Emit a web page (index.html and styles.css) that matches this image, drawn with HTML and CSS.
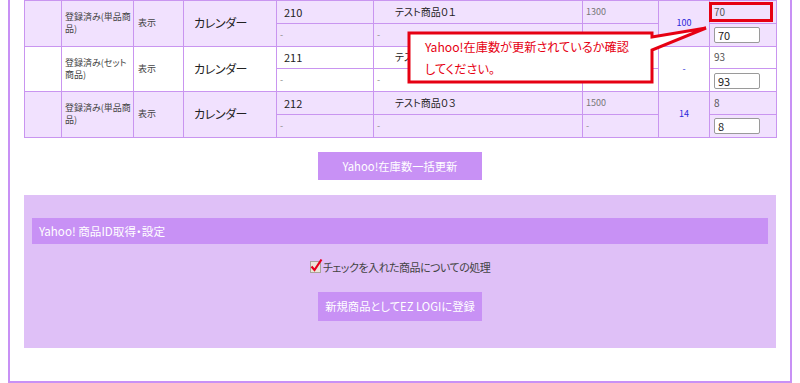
FILE: index.html
```html
<!DOCTYPE html>
<html lang="ja">
<head>
  <meta charset="UTF-8" />
  <meta name="viewport" content="width=device-width, initial-scale=1.0" />
  <title>Yahoo!在庫連携</title>
  <link rel="stylesheet" href="styles.css">
</head>
<body>
  <div class="page">
    <table class="items">
      <colgroup>
        <col style="width:37px"><col style="width:72px"><col style="width:50px">
        <col style="width:93px"><col style="width:97px"><col style="width:209px">
        <col style="width:76px"><col style="width:51px"><col style="width:67px">
      </colgroup>
      <tbody>
        <tr class="top odd">
          <td rowspan="2"></td>
          <td rowspan="2" class="status">登録済み(単品商品)</td>
          <td rowspan="2" class="small">表示</td>
          <td rowspan="2" class="cat">カレンダー</td>
          <td class="code">210</td>
          <td class="name">テスト商品０１</td>
          <td class="price">1300</td>
          <td rowspan="2" class="stock">100</td>
          <td class="ystock">70</td>
        </tr>
        <tr class="bottom odd">
          <td class="dash">-</td>
          <td class="dash">-</td>
          <td class="dash">-</td>
          <td class="field"><input type="text" value="70"></td>
        </tr>
        <tr class="top">
          <td rowspan="2"></td>
          <td rowspan="2" class="status">登録済み(セット商品)</td>
          <td rowspan="2" class="small">表示</td>
          <td rowspan="2" class="cat">カレンダー</td>
          <td class="code">211</td>
          <td class="name">テスト商品０２</td>
          <td class="price">1400</td>
          <td rowspan="2" class="stock">-</td>
          <td class="ystock">93</td>
        </tr>
        <tr class="bottom">
          <td class="dash">-</td>
          <td class="dash">-</td>
          <td class="dash">-</td>
          <td class="field"><input type="text" value="93"></td>
        </tr>
        <tr class="top odd">
          <td rowspan="2"></td>
          <td rowspan="2" class="status">登録済み(単品商品)</td>
          <td rowspan="2" class="small">表示</td>
          <td rowspan="2" class="cat">カレンダー</td>
          <td class="code">212</td>
          <td class="name">テスト商品０３</td>
          <td class="price">1500</td>
          <td rowspan="2" class="stock">14</td>
          <td class="ystock">8</td>
        </tr>
        <tr class="bottom odd">
          <td class="dash">-</td>
          <td class="dash">-</td>
          <td class="dash">-</td>
          <td class="field"><input type="text" value="8"></td>
        </tr>
      </tbody>
    </table>

    <button type="button" class="btn btn-update">Yahoo!在庫数一括更新</button>

    <div class="panel">
      <div class="panel-title">Yahoo! 商品ID取得・設定</div>
      <div class="check-row">
        <svg class="check-icon" width="13" height="16" viewBox="0 0 13 16">
          <rect x="0.5" y="3.5" width="10" height="11" fill="#ece6da" stroke="#a9a49a"/>
          <path d="M1.5 8.5 L4.5 12 L11.5 1.5" fill="none" stroke="#e8001c" stroke-width="2.2"/>
        </svg><span>チェックを入れた商品についての処理</span>
      </div>
      <button type="button" class="btn btn-register">新規商品としてEZ LOGIに登録</button>
    </div>

    <!-- 注釈 -->
    <div class="mark"></div>
    <div class="callout">
      <svg width="302" height="58" viewBox="0 0 302 58">
        <path d="M2 7 H245 V11 L299 2 L245 24 V56 H2 Z" fill="#fff" stroke="#e60012" stroke-width="3" stroke-linejoin="miter"/>
      </svg>
      <p class="callout-text">Yahoo!在庫数が更新されているか確認<br>してください。</p>
    </div>
  </div>
</body>
</html>
```

FILE: styles.css
```css
body {
  margin: 0 8px;
  font-family: "Noto Sans CJK JP", "Noto Sans", sans-serif;
  font-feature-settings: "palt";
  color: #333;
  background: #fff;
}
.page {
  position: relative;
  border: 2px solid #c891f5;
  border-top: none;
  padding: 0 14px 33px;
}
.items {
  width: 100%;
  border-collapse: collapse;
  table-layout: fixed;
}
.items td {
  border: 1px solid #c995f0;
  padding: 0 3px;
  font-size: 9px;
  line-height: 12px;
  vertical-align: middle;
  background: #fff;
}
.items .odd td {
  background: #f1e1fe;
}
.items tr.top {
  height: 22.5px;
}
.items tr.bottom {
  height: 23px;
}
.status {
  padding-right: 0 !important;
  color: #444;
}
.small {
  padding-left: 4px !important;
  color: #444;
}
.cat {
  font-size: 12px !important;
  letter-spacing: -0.4px;
  padding-left: 10px !important;
  color: #222;
}
.code {
  font-size: 11px !important;
  padding-left: 7px !important;
  color: #222;
}
.name {
  font-size: 10px !important;
  padding-left: 21px !important;
  color: #222;
}
.price {
  padding-left: 3px;
  color: #777;
}
.ystock {
  padding-left: 4px !important;
  font-size: 10px !important;
  color: #555;
}
.stock {
  text-align: center;
  color: #2b2bd9;
}
.dash {
  color: #888;
}
.field input {
  width: 46px;
  height: 16px;
  box-sizing: border-box;
  margin: 1px 0 0 1px;
  padding: 0 3px;
  border: 1px solid #9a9a9a;
  border-radius: 2px;
  font-family: inherit;
  font-size: 11px;
  color: #222;
}
.btn {
  display: block;
  width: 164px;
  margin: 0 auto;
  padding: 0;
  border: none;
  background: #c891f5;
  color: #fff;
  font-family: inherit;
  font-feature-settings: "palt";
  font-size: 11.3px;
  white-space: nowrap;
  cursor: pointer;
}
.btn-update {
  height: 28px;
  margin-top: 14px;
}
.panel {
  margin-top: 15px;
  background: #dfc0f7;
  padding: 23px 8px 27px;
}
.panel-title {
  height: 26px;
  line-height: 26px;
  padding-left: 7px;
  background: #c891f5;
  color: #fff;
  font-size: 11.6px;
}
.check-row {
  margin-top: 14px;
  text-align: center;
  font-size: 11px;
  letter-spacing: -0.5px;
  color: #444;
}
.check-icon {
  vertical-align: -2px;
}
.btn-register {
  height: 29px;
  margin-top: 17px;
}
.mark {
  position: absolute;
  left: 699px;
  top: 2px;
  width: 64px;
  height: 20px;
  box-sizing: border-box;
  border: 3px solid #e60012;
}
.callout {
  position: absolute;
  left: 397px;
  top: 26px;
  width: 302px;
  height: 58px;
}
.callout svg {
  display: block;
}
.callout-text {
  position: absolute;
  left: 18px;
  top: 10px;
  margin: 0;
  font-size: 12.2px;
  line-height: 22px;
  color: #e60012;
}
```
